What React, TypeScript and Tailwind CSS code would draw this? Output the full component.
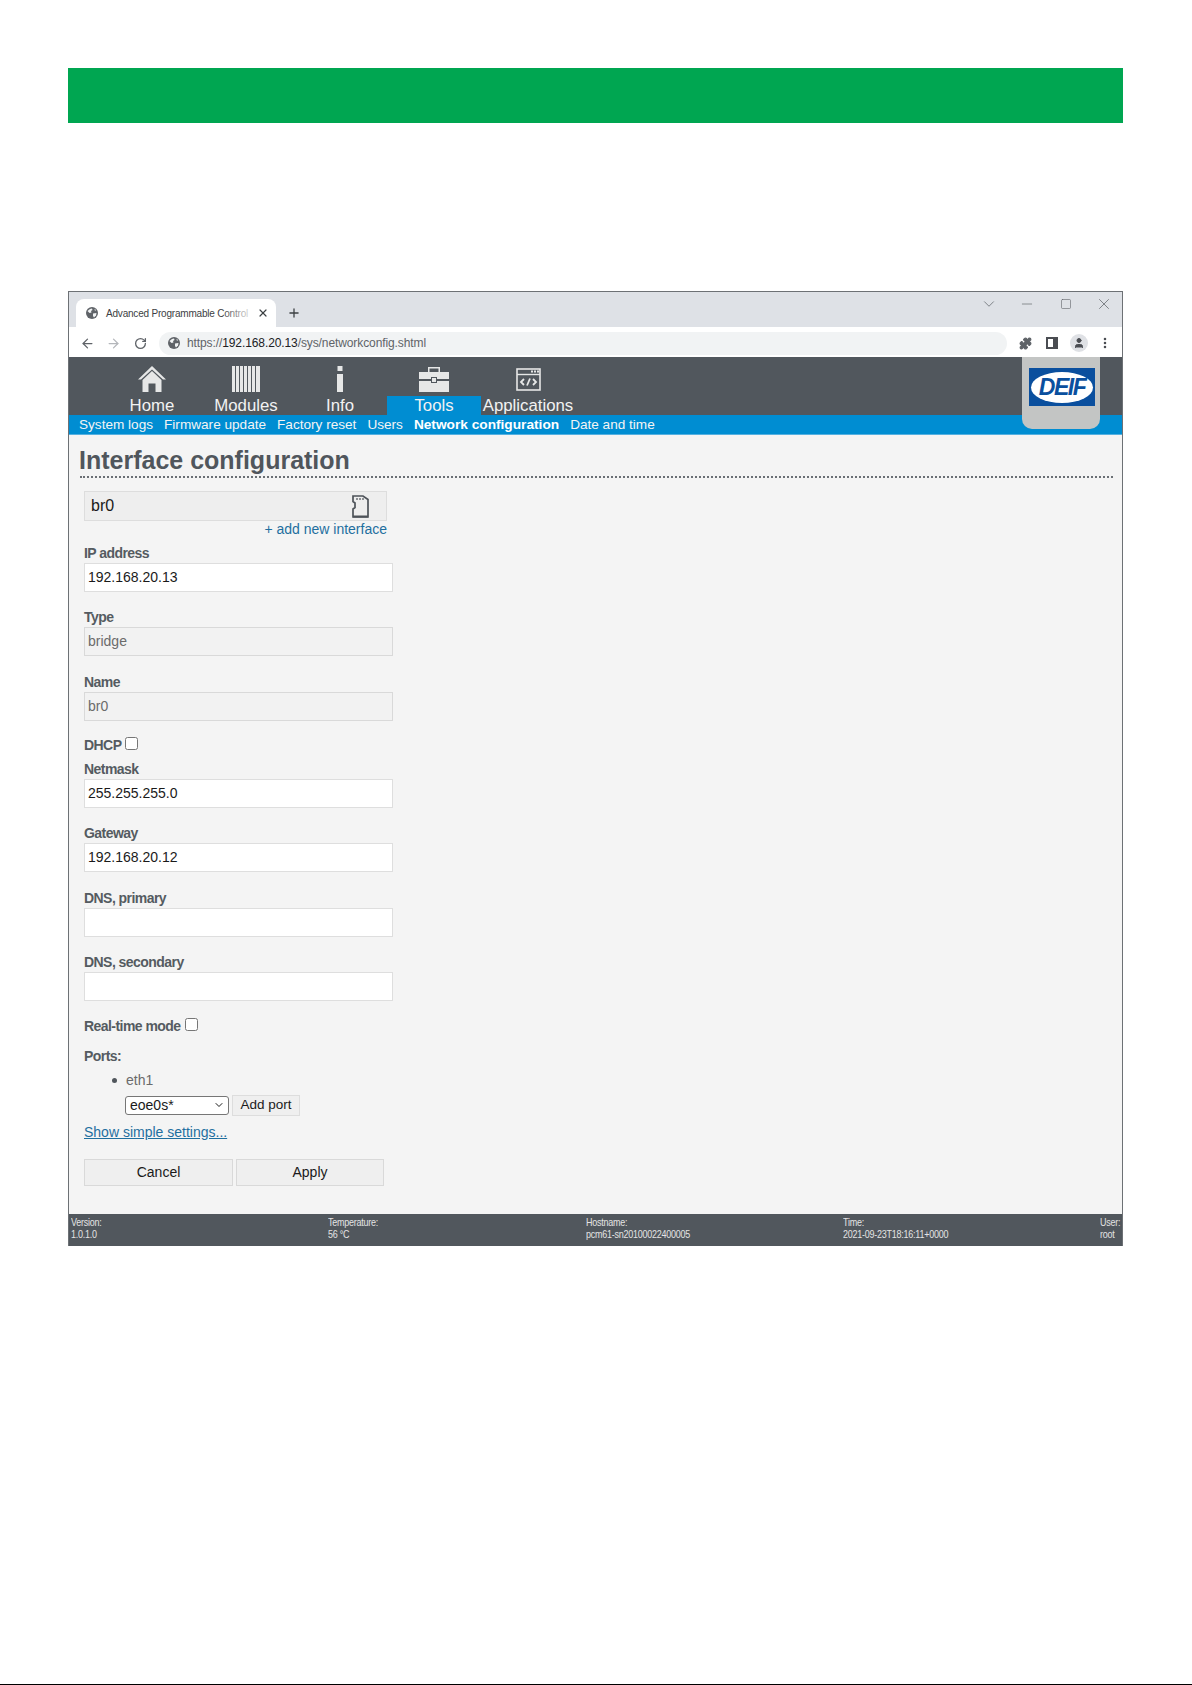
import { ArrowLeft, ArrowRight, ChevronDown, Minus, MoreVertical, Plus, Puzzle, RotateCw, Square, User, X } from 'lucide-react'

const font = { fontFamily: '"Liberation Sans", Arial, sans-serif' }

const navItems = [
  { label: 'Home', icon: <HomeIcon /> },
  { label: 'Modules', icon: <ModulesIcon /> },
  { label: 'Info', icon: <InfoIcon /> },
  { label: 'Tools', icon: <ToolsIcon />, active: true },
  { label: 'Applications', icon: <AppsIcon /> },
]

const subItems = ['System logs', 'Firmware update', 'Factory reset', 'Users', 'Network configuration', 'Date and time']

const footerItems = [
  ['Version:', '1.0.1.0'],
  ['Temperature:', '56 °C'],
  ['Hostname:', 'pcm61-sn20100022400005'],
  ['Time:', '2021-09-23T18:16:11+0000'],
]

function GlobeIcon() {
  return (
    <svg width="12" height="12" viewBox="0 0 12 12" className="shrink-0">
      <circle cx="6" cy="6" r="6" fill="#5f6368" />
      <path d="M1.5 4 L4 2 L6 1.5 L6.5 3 L5 4 L5.5 5.5 L3.5 6 Z" fill="#f1f3f4" />
      <path d="M7 6.5 L10.5 6 L10 8.5 L8 10.5 L7 9 Z" fill="#f1f3f4" />
      <path d="M8.5 1.8 L10 3 L9 4 Z" fill="#f1f3f4" />
    </svg>
  )
}

function HomeIcon() {
  return (
    <svg width="28" height="26" viewBox="0 0 28 26" fill="#e6e7e7">
      <path d="M14 0 L28 13.5 L25 13.5 L14 3.5 L3 13.5 L0 13.5 Z" />
      <path d="M4.5 14 L14 5 L23.5 14 V26 H17.5 V17.5 H10.5 V26 H4.5 Z" />
    </svg>
  )
}

function ModulesIcon() {
  return (
    <svg width="28" height="26" viewBox="0 0 28 26" fill="#e6e7e7">
      <rect x="0" width="3" height="26" />
      <rect x="4" width="3" height="26" />
      <rect x="8" width="3" height="26" />
      <rect x="12" width="3" height="26" />
      <rect x="16" width="3" height="26" />
      <rect x="20" width="3" height="26" />
      <rect x="24" width="4" height="26" />
    </svg>
  )
}

function InfoIcon() {
  return (
    <svg width="6" height="26" viewBox="0 0 6 26" fill="#e6e7e7">
      <rect x="0.5" y="0" width="5" height="5" />
      <rect x="0" y="8" width="6" height="18" />
    </svg>
  )
}

function ToolsIcon() {
  return (
    <svg width="30" height="26" viewBox="0 0 30 26" fill="#e6e7e7">
      <path d="M9 6 V1 H21 V6 H19.5 V2.5 H10.5 V6 Z" />
      <path d="M0 6 H30 V13 H18 V11 H12 V13 H0 Z" />
      <path d="M0 15 H12 V17 H18 V15 H30 V26 H0 Z" />
      <rect x="13" y="12" width="4" height="4" />
    </svg>
  )
}

function AppsIcon() {
  return (
    <svg width="25" height="23" viewBox="0 0 25 23" fill="none" stroke="#e6e7e7" className="mb-[1px]">
      <rect x="1" y="1" width="23" height="21" strokeWidth="1.6" />
      <path d="M1 6.5 H24" strokeWidth="1.4" />
      <path d="M15 3.5 H17 M18 3.5 H20 M21 3.5 H23" strokeWidth="2" />
      <path d="M8 11 L5 14 L8 17 M17 11 L20 14 L17 17 M14 10.5 L11 17.5" strokeWidth="1.8" />
    </svg>
  )
}

function SdCardIcon() {
  return (
    <svg width="17" height="23" viewBox="0 0 17 23" fill="none" stroke="#4e5359" strokeWidth="1.7">
      <path d="M1 1 H11 L16 4.5 V22 H1 V14 L3 12.5 V8 L1 6.5 Z" />
      <path d="M5 3 V5 M8 3 V5 M11 3 V5" strokeWidth="1.2" />
      <path d="M1 21.5 H16" strokeWidth="2" />
    </svg>
  )
}

function Logo() {
  return (
    <div className="absolute right-[22px] top-0 w-[78px] h-[72px] bg-[#c3c5c4] rounded-b-[10px] pt-[11px] px-[7px]">
      <div className="w-[66px] h-[38px] bg-[#0a4f9e] flex items-center justify-center">
        <div className="w-[62px] h-[31px] bg-white rounded-[50%] flex items-center justify-center">
          <span className="text-[23px] leading-none font-bold italic text-[#0a4f9e] tracking-[-1.5px]">DEIF</span>
        </div>
      </div>
    </div>
  )
}

function Field({ label, value, disabled, gap }: { label: string; value?: string; disabled?: boolean; gap?: string }) {
  return (
    <div className={gap}>
      <div className="text-[14px] leading-[16px] font-bold text-[#555b61] tracking-[-0.55px]">{label}</div>
      <div
        className={`mt-[2px] w-[309px] h-[29px] border flex items-center pl-[3px] text-[14px] ${
          disabled ? 'bg-[#f2f2f2] border-[#d9d9d9] text-[#6b6b6b]' : 'bg-white border-[#dedede] text-[#1a1a1a]'
        }`}
      >
        {value}
      </div>
    </div>
  )
}

function CheckBox() {
  return <span className="inline-block w-[13px] h-[13px] -translate-y-[2px] bg-white border border-[#767676] rounded-[2.5px]" />
}

export default function App() {
  return (
    <div className="relative w-[1192px] h-[1685px] bg-white" style={font}>
      <div className="pt-[68px] pl-[68px] pr-[69px]">
        <div className="h-[55px] bg-[#00a651]" />

        <div className="mt-[168px] h-[955px] border border-[#6d7175] border-b-0 flex flex-col">
          {/* Browser chrome */}
          <div className="h-[35px] bg-[#dee1e6] flex items-end pl-[7px] shrink-0">
            <div className="relative w-[200px] h-[28px] bg-white rounded-t-[8px] flex items-center pl-[10px] pr-[7px] text-[#3c4043]">
              <GlobeIcon />
              <span className="ml-[8px] whitespace-nowrap text-[10px] tracking-[-0.2px]">Advanced Programmable Control</span>
              <span className="absolute left-[146px] top-0 w-[34px] h-full bg-gradient-to-r from-transparent to-white" />
              <X size={12} strokeWidth={2.4} className="absolute right-[7px] top-[8px] text-[#3c4043]" />
            </div>
            <Plus size={14} strokeWidth={2.2} className="ml-[11px] mb-[7px] text-[#3c4043]" />
            <div className="ml-auto flex items-center self-start pt-[3px] text-[#5f6368]">
              <ChevronDown size={18} strokeWidth={1} className="mr-[21px]" />
              <Minus size={16} strokeWidth={1} className="mr-[25px]" />
              <Square size={12} strokeWidth={1.2} className="mr-[23px]" />
              <X size={18} strokeWidth={1} className="mr-[9px]" />
            </div>
          </div>
          <div className="h-[30px] bg-white flex items-center shrink-0 pl-[11px] pt-[2px] text-[#5f6368]">
            <ArrowLeft size={15} strokeWidth={2} />
            <ArrowRight size={15} strokeWidth={2} className="ml-[11px] text-[#b4b7bb]" />
            <RotateCw size={13} strokeWidth={2.4} className="ml-[13px]" />
            <div className="ml-[12px] w-[848px] h-[23px] rounded-full bg-[#f1f3f4] flex items-center pl-[9px]">
              <GlobeIcon />
              <span className="ml-[7px] text-[12px] tracking-[-0.1px] text-[#5f6368]">
                https://<span className="text-[#202124]">192.168.20.13</span>/sys/networkconfig.shtml
              </span>
            </div>
            <Puzzle size={13} strokeWidth={2} fill="#5f6368" className="ml-[12px] text-[#5f6368]" />
            <span className="ml-[14px] w-[12px] h-[12px] border-[2px] border-r-[5px] border-[#4a4d52]" />
            <span className="ml-[12px] w-[18px] h-[18px] rounded-full bg-[#dfe1e5] flex items-center justify-center">
              <User size={12} fill="#4a4d52" strokeWidth={2} className="text-[#4a4d52]" />
            </span>
            <MoreVertical size={14} strokeWidth={2.4} className="ml-[10px] text-[#4a4d52]" />
          </div>

          {/* Page header */}
          <div className="relative shrink-0">
            <div className="h-[58px] bg-[#51575d] flex pl-[36px] text-[16.8px] text-[#f2f2f2]">
              {navItems.map((item) => (
                <div key={item.label} className="relative w-[94px] flex flex-col items-center">
                  <div className="h-[39px] pb-[4px] flex items-end justify-center">{item.icon}</div>
                  <div className={`w-full h-[19px] leading-[19px] text-center whitespace-nowrap ${item.active ? 'bg-[#008dd2]' : ''}`}>
                    {item.label}
                  </div>
                </div>
              ))}
            </div>
            <div className="h-[20px] bg-[#008dd2] border-b border-[#55b0e0] flex gap-[11px] pl-[10px] text-[13.6px] leading-[19px] text-[#f4f4f4]">
              {subItems.map((item) => (
                <span key={item} className={item === 'Network configuration' ? 'font-bold text-white text-[13.7px]' : ''}>
                  {item}
                </span>
              ))}
            </div>
            <Logo />
          </div>

          {/* Content */}
          <div className="flex-1 bg-[#f4f4f4] pl-[11px] pr-[9px] pt-[11px]">
            <h1 className="-ml-px text-[25px] leading-[29px] font-bold text-[#50565c]">Interface configuration</h1>
            <div className="mt-px border-t-2 border-dotted border-[#6a6f74]" />

            <div className="ml-[4px] mt-[13px]">
              <div className="w-[303px] h-[30px] bg-[#eeeeee] border border-[#dddddd] flex items-center justify-between pl-[6px] pr-[17px] text-[16px] text-[#1a1a1a]">
                br0
                <SdCardIcon />
              </div>
              <div className="w-[303px] text-right text-[14px] leading-[16px] text-[#1f6f9f]">+ add new interface</div>

              <Field label="IP address" value="192.168.20.13" gap="mt-[7.5px]" />
              <Field label="Type" value="bridge" disabled gap="mt-[17.5px]" />
              <Field label="Name" value="br0" disabled gap="mt-[17.5px]" />

              <div className="mt-[17px] h-[16px] flex items-center gap-[4px] text-[14px] font-bold text-[#555b61] tracking-[-0.55px]">
                DHCP <CheckBox />
              </div>
              <Field label="Netmask" value="255.255.255.0" gap="mt-[7px]" />
              <Field label="Gateway" value="192.168.20.12" gap="mt-[17.5px]" />
              <Field label="DNS, primary" gap="mt-[17.5px]" />
              <Field label="DNS, secondary" gap="mt-[17.5px]" />

              <div className="mt-[17.5px] h-[16px] flex items-center gap-[4px] text-[14px] font-bold text-[#555b61] tracking-[-0.55px]">
                Real-time mode <CheckBox />
              </div>
              <div className="mt-[13.5px] text-[14px] leading-[16px] font-bold text-[#555b61] tracking-[-0.55px]">Ports:</div>
              <ul className="mt-[8px] ml-[42px] text-[14px] leading-[16px] text-[#6b6b6b]">
                <li className="relative">
                  <span className="absolute left-[-14px] top-[6px] w-[5px] h-[5px] rounded-full bg-[#50565c]" />
                  eth1
                </li>
              </ul>
              <div className="mt-[6.5px] ml-[41px] flex items-center gap-[3px]">
                <div className="w-[104px] h-[19px] bg-white border border-[#767676] rounded-[3px] flex items-center justify-between pl-[4px] pr-[3px] text-[14px] text-[#1a1a1a]">
                  eoe0s*
                  <ChevronDown size={12} strokeWidth={2} />
                </div>
                <div className="w-[68px] h-[21px] bg-[#efefef] border border-[#dddddd] flex items-center justify-center text-[13.5px] text-[#1a1a1a]">
                  Add port
                </div>
              </div>
              <div className="mt-[8px] text-[14px] leading-[16px] text-[#1f6f9f] underline">Show simple settings...</div>
              <div className="mt-[19.5px] flex gap-[3px] text-[14px] text-[#1a1a1a]">
                <div className="w-[149px] h-[27px] bg-[#efefef] border border-[#d9d9d9] flex items-center justify-center">Cancel</div>
                <div className="w-[148px] h-[27px] bg-[#efefef] border border-[#d9d9d9] flex items-center justify-center">Apply</div>
              </div>
            </div>
          </div>

          {/* Status bar */}
          <div className="h-[32px] shrink-0 bg-[#51575d] flex pl-[2px] pt-[3px] text-[11.5px] leading-[11.5px] text-[#e4e4e4] tracking-[-0.3px]">
            {footerItems.map(([k, v]) => (
              <div key={k} className="w-[257.3px] origin-left scale-x-[0.78] shrink-0 whitespace-nowrap">
                <div>{k}</div>
                <div>{v}</div>
              </div>
            ))}
            <div className="origin-left scale-x-[0.78]">
              <div>User:</div>
              <div>root</div>
            </div>
          </div>
        </div>
      </div>
      <div className="absolute inset-x-0 bottom-0 h-px bg-black" />
    </div>
  )
}
